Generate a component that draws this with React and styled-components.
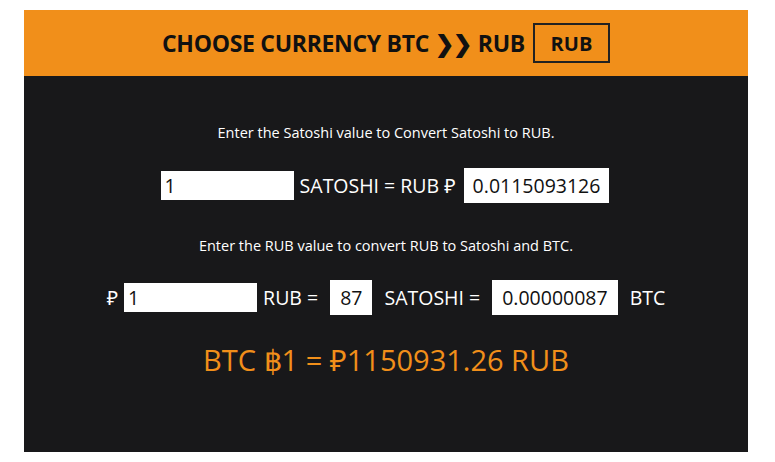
import React, { useState } from 'react';
import styled, { createGlobalStyle } from 'styled-components';

const GlobalStyle = createGlobalStyle`
    body {
        margin: 0;
        background: #fff;
        font-family: "Open Sans", "Noto Sans", sans-serif;
    }
`;

const Panel = styled.div`
    width: 724px;
    margin: 10px 0 0 24px;
`;

const Header = styled.header`
    height: 66px;
    background: #f18f1a;
    display: flex;
    justify-content: center;
    align-items: center;
    gap: 8px;
    color: #111;

    h1 {
        margin: 0;
        font-size: 23px;
        font-weight: 700;
        letter-spacing: -0.3px;
    }
`;

const CurrencyBox = styled.div`
    width: 73px;
    height: 36px;
    border: 2px solid #222;
    display: flex;
    justify-content: center;
    align-items: center;
    font-size: 20px;
    font-weight: 700;
`;

const Body = styled.main`
    height: 376px;
    background: #18181a;
    box-sizing: border-box;
    padding-top: 47px;
    display: flex;
    flex-direction: column;
    align-items: center;
    color: #fff;
`;

const Hint = styled.p`
    margin: 0;
    font-size: 14.5px;
    line-height: 20px;
`;

const Row = styled.div`
    display: flex;
    align-items: center;
    gap: 6px;
    margin-top: ${p => p.top}px;
    margin-bottom: ${p => p.bottom}px;
    font-size: 19.5px;
`;

const Field = styled.input`
    width: 133px;
    height: 29px;
    box-sizing: border-box;
    border: none;
    outline: none;
    padding: 0 4px;
    font-family: inherit;
    font-size: 19.5px;
    color: #111;
    background: #fff;
`;

const Result = styled.div`
    height: 35px;
    box-sizing: border-box;
    padding: 0 ${p => p.pad || 10}px;
    background: #fff;
    color: #111;
    display: flex;
    align-items: center;
    font-size: 19.5px;
    margin: 0 ${p => p.m || 0}px;
`;

const Rate = styled.div`
    margin-top: 25px;
    color: #f18f1a;
    font-size: 29px;
`;

const RATE = 1150931.26;

export default function App() {
    const [sats, setSats] = useState('1');
    const [rub, setRub] = useState('1');

    const satToRub = (Number(sats) / 1e8) * RATE;
    const rubToSat = Math.round((Number(rub) / RATE) * 1e8);
    const rubToBtc = (rubToSat / 1e8).toFixed(8);

    return (
        <>
            <GlobalStyle />
            <Panel>
                <Header>
                    <h1>CHOOSE CURRENCY BTC ❯❯ RUB</h1>
                    <CurrencyBox>RUB</CurrencyBox>
                </Header>
                <Body>
                    <Hint>Enter the Satoshi value to Convert Satoshi to RUB.</Hint>
                    <Row top={25} bottom={33}>
                        <Field value={sats} onChange={e => setSats(e.target.value)} />
                        <span>SATOSHI = RUB ₽</span>
                        <Result pad={9} m={2}>{satToRub.toFixed(10)}</Result>
                    </Row>
                    <Hint>Enter the RUB value to convert RUB to Satoshi and BTC.</Hint>
                    <Row top={24}>
                        <span>₽</span>
                        <Field value={rub} onChange={e => setRub(e.target.value)} />
                        <span>RUB =</span>
                        <Result m={6}>{rubToSat}</Result>
                        <span>SATOSHI =</span>
                        <Result m={6}>{rubToBtc}</Result>
                        <span>BTC</span>
                    </Row>
                    <Rate>BTC ฿1 = ₽{RATE.toFixed(2)} RUB</Rate>
                </Body>
            </Panel>
        </>
    );
}
